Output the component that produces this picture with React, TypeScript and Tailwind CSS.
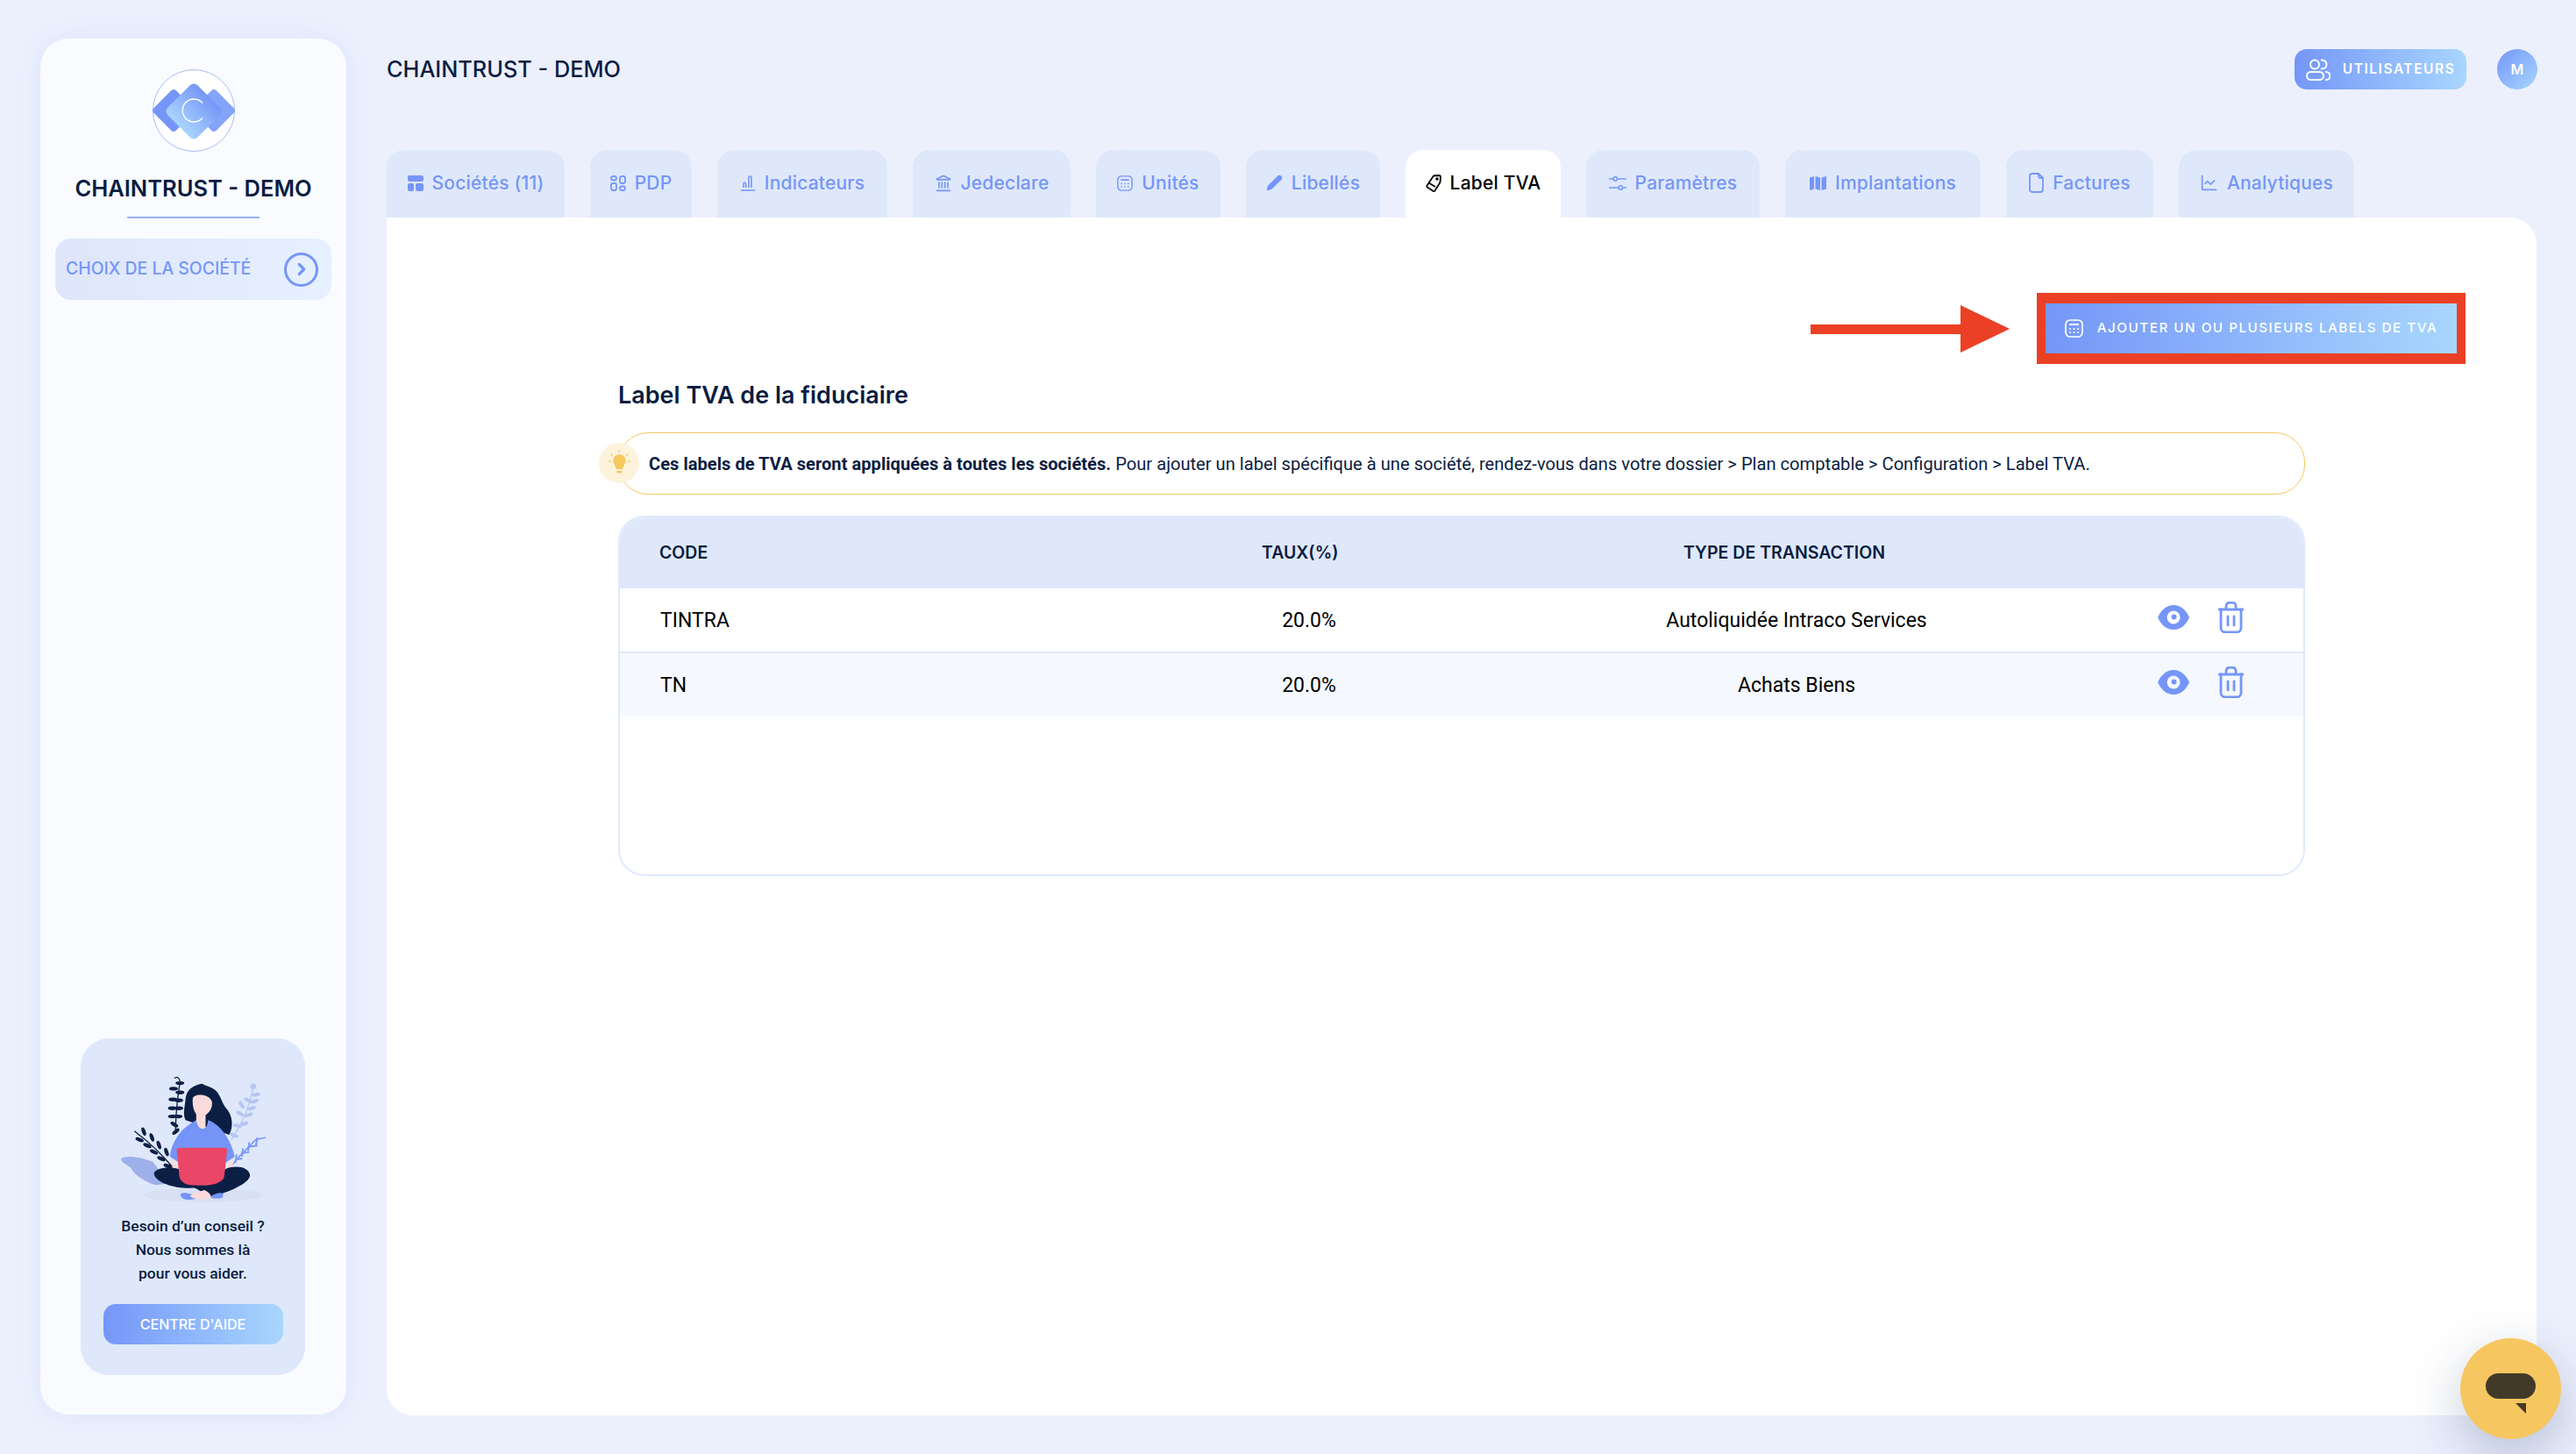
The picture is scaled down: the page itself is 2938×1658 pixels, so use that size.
import React from 'react';
import { Landmark, ChartLine, ChevronRight, Pen } from 'lucide-react';

const poppins = "font-['Inter','Open_Sans',sans-serif]";

const LayoutIcon = () => (
  <svg viewBox="0 0 18 18" className="h-[18px] w-[18px]" fill="currentColor">
    <rect x="0" y="0" width="18" height="7" rx="2" />
    <rect x="0" y="9" width="7" height="9" rx="2" />
    <rect x="9" y="9" width="9" height="9" rx="2" />
  </svg>
);

const PdpIcon = () => (
  <svg viewBox="0 0 18 18" className="h-[18px] w-[18px]" fill="none" stroke="currentColor" strokeWidth="1.800">
    <rect x="1" y="1" width="6" height="4.500" rx="2.200" />
    <rect x="11" y="1" width="6" height="8" rx="2.200" />
    <rect x="1" y="9" width="6" height="8" rx="2.200" />
    <rect x="11" y="12.500" width="6" height="4.500" rx="2.200" />
  </svg>
);

const BarsIcon = () => (
  <svg viewBox="0 0 18 18" className="h-[18px] w-[18px]" fill="none" stroke="currentColor" strokeWidth="1.600">
    <path d="M1 17h16" />
    <path d="M4 14V9.500a1.200 1.200 0 0 1 2.600 0V14" />
    <path d="M10 14V2.500a1.400 1.400 0 0 1 3 0V14" />
  </svg>
);

const MapIcon = () => (
  <svg viewBox="0 0 19 16" className="h-[16px] w-[19px]" fill="currentColor">
    <path d="M0 1.500 5 0v14.500L0 16z" />
    <path d="M6.500 0 12 1.500V16l-5.500-1.500z" />
    <path d="M13.500 1.500 19 0v14.500L13.500 16z" />
  </svg>
);

const SlidersIcon = () => (
  <svg viewBox="0 0 20 18" className="h-[18px] w-[20px]" fill="none" stroke="currentColor" strokeWidth="1.600">
    <path d="M0 4h5M9.500 4H20M0 14h11M15.500 14H20" />
    <circle cx="7.300" cy="4" r="2.200" />
    <circle cx="13.300" cy="14" r="2.200" />
  </svg>
);

const TagIcon = () => (
  <svg viewBox="0 0 18 20" className="h-[20px] w-[18px]" fill="none" stroke="currentColor" strokeWidth="1.800" strokeLinejoin="round">
    <path d="M9 1.500 15 1c1.200 0 2 .800 2 2l-.500 6-6 9.500c-.500.700-1.200.800-1.800.400L2 14.500c-.700-.500-.800-1.200-.400-1.900z" />
    <path d="M3.500 9.500l7.500 4.500" />
    <circle cx="13" cy="5" r="0.900" />
  </svg>
);

const FileIcon = () => (
  <svg viewBox="0 0 17 23" className="h-[23px] w-[17px]" fill="none" stroke="currentColor" strokeWidth="1.800" strokeLinejoin="round">
    <path d="M4 1h7l5 5v13a3 3 0 0 1-3 3H4a3 3 0 0 1-3-3V4a3 3 0 0 1 3-3z" />
    <path d="M11 1v3a2 2 0 0 0 2 2h3" />
  </svg>
);

const UsersIcon = () => (
  <svg viewBox="0 0 28 25" className="h-[25px] w-[28px]" fill="none" stroke="currentColor" strokeWidth="2">
    <circle cx="10" cy="6.500" r="5" />
    <path d="M17 1.500h1.500a5 5 0 0 1 0 10H17" />
    <rect x="1" y="15" width="19" height="9" rx="4.500" />
    <path d="M22 15h1a4.500 4.500 0 0 1 0 9h-1" />
  </svg>
);

const TrashIcon = () => (
  <svg viewBox="0 0 29 36" className="h-[36px] w-[29px]" fill="none" stroke="currentColor" strokeWidth="2.800" strokeLinecap="round">
    <path d="M1 9h27" />
    <path d="M3 9v21a5 5 0 0 0 5 5h13a5 5 0 0 0 5-5V9" />
    <path d="M9 8V5a4 4 0 0 1 4-4h3a4 4 0 0 1 4 4v3" />
    <path d="M11 17v10M18 17v10" />
  </svg>
);

// same glyph for the Unités tab and the add button
const CalcIcon = ({ s }: { s: string }) => (
  <svg viewBox="0 0 21 21" className={s} fill="none" stroke="currentColor" strokeWidth="1.700">
    <rect x="1" y="1" width="19" height="19" rx="5" />
    <path d="M5 6h11" strokeWidth="2" />
    <path d="M6 11h.01M10.500 11h.01M15 11h.01M6 15h.01M10.500 15h.01M15 15h.01" strokeWidth="2" strokeLinecap="round" />
  </svg>
);

const tabs = [
  { label: 'Sociétés (11)', icon: <LayoutIcon />, w: 'w-[203px]' },
  { label: 'PDP', icon: <PdpIcon />, w: 'w-[116px]' },
  { label: 'Indicateurs', icon: <BarsIcon />, w: 'w-[194px]' },
  { label: 'Jedeclare', icon: <Landmark size={20} />, w: 'w-[180px]' },
  { label: 'Unités', icon: <CalcIcon s="h-[18px] w-[18px]" />, w: 'w-[142px]' },
  { label: 'Libellés', icon: <Pen size={19} fill="currentColor" />, w: 'w-[153px]' },
  { label: 'Label TVA', icon: <TagIcon />, w: 'w-[177px]', active: true },
  { label: 'Paramètres', icon: <SlidersIcon />, w: 'w-[198px]' },
  { label: 'Implantations', icon: <MapIcon />, w: 'w-[223px]' },
  { label: 'Factures', icon: <FileIcon />, w: 'w-[168px]' },
  { label: 'Analytiques', icon: <ChartLine size={21} />, w: 'w-[200px]' },
];

const rows = [
  { code: 'TINTRA', rate: '20.0%', type: 'Autoliquidée Intraco Services', bg: 'bg-white' },
  { code: 'TN', rate: '20.0%', type: 'Achats Biens', bg: 'bg-[#f5f8fe]' },
];

const Logo = () => (
  <svg viewBox="0 0 94 94" className="h-[94px] w-[94px]">
    <defs>
      <linearGradient id="lg" x1="0" y1="0" x2="0" y2="1">
        <stop offset="0" stopColor="#7596f8" />
        <stop offset="1" stopColor="#a9d6fd" />
      </linearGradient>
    </defs>
    <circle cx="47" cy="47" r="46.500" fill="#fff" stroke="#93a9f1" strokeWidth="0.800" />
    <rect x="6" y="29" width="36" height="36" rx="4" transform="rotate(45 24 47)" fill="#7596f8" />
    <rect x="52" y="29" width="36" height="36" rx="4" transform="rotate(45 70 47)" fill="#84a4f9" />
    <rect x="23" y="24" width="48" height="48" rx="6" transform="rotate(45 47 48)" fill="url(#lg)" />
    <path d="M57 38.500A13 13 0 1 0 57 55.500" fill="none" stroke="#fff" strokeWidth="1.400" />
  </svg>
);

const Fern = ({ color, d, leaves }: { color: string; d: string; leaves: number[][] }) => (
  <g stroke={color} fill={color}>
    <path d={d} fill="none" strokeWidth="4" />
    {leaves.map(([x, y, r], i) => (
      <ellipse key={i} cx={x} cy={y} rx="15" ry="6.500" transform={`rotate(${r} ${x} ${y})`} stroke="none" />
    ))}
  </g>
);

const Illustration = () => (
  <svg viewBox="220 190 520 450" className="h-[150px] w-[173px]">
    <ellipse cx="513" cy="610" rx="205" ry="24" fill="#d8e1f3" />
    <path d="M232 485c18-14 68-6 108 10l60 75-50 5c-50-15-80-45-85-60-15-10-35-20-33-30z" fill="#9db0ea" />
    <Fern
      color="#0b1f44"
      d="M278 390c40 30 90 75 132 125"
      leaves={[
        [296, 420, 20], [310, 392, 70], [322, 440, 25], [338, 412, 70], [345, 462, 25],
        [362, 438, 70], [370, 485, 25], [388, 462, 70], [392, 510, 20],
      ]}
    />
    <Fern
      color="#0b1f44"
      d="M415 210c10-10 22 0 18 20-8 50-14 110-14 170"
      leaves={[
        [434, 226, 0], [412, 245, 0], [434, 258, 0], [410, 282, 0], [430, 285, 0],
        [408, 312, 0], [430, 312, 0], [408, 340, 0], [428, 340, 0], [415, 368, 30], [420, 392, -40],
      ]}
    />
    <Fern
      color="#b6c5f1"
      d="M685 240c-10 60-40 130-75 180"
      leaves={[
        [695, 265, -10], [668, 285, 30], [690, 288, -20], [645, 300, 60], [680, 312, -20],
        [640, 330, 30], [670, 335, -20], [632, 372, 10], [655, 365, -20], [620, 405, 20],
      ]}
    />
    <circle cx="685" cy="237" r="10" fill="#b6c5f1" />
    <path d="M728 412l-35 8-28 30-30 30-25 30" fill="none" stroke="#7b98f8" strokeWidth="5" />
    <path
      d="M700 412l-6 30M672 428l-4 30M650 450l-3 28M628 470l-3 28M700 440l-30 4M672 462l-28 4M648 484l-24 4"
      fill="none"
      stroke="#7b98f8"
      strokeWidth="6"
    />
    <path
      d="M510 228c-30 5-55 20-57 55-2 25-10 45 0 70l150 50c15-30 12-65-10-90-15-18-20-50-40-65-15-10-30-12-43-20z"
      fill="#0b1f44"
    />
    <path d="M478 280c0-20 58-20 66 10 2 18-6 35-22 45v40c-5 12-28 12-32-2v-40c-10-15-14-35-12-53z" fill="#fadada" />
    <path d="M400 478c5-40 25-90 90-125 5 40 40 40 40 0 45 15 80 70 92 125l-30 20H430z" fill="#7495f7" />
    <path d="M400 478l28 35v40l-15-20z M622 478l-28 35v40l15-20z" fill="#fadada" />
    <path
      d="M345 535c5-15 40-25 85-15l60 55 40 0 60-55c40-15 80-5 84 20 3 25-60 55-130 75-25-5-50-30-65-30-50 5-130-15-134-50z"
      fill="#0b1f44"
    />
    <path d="M436 605c20-10 60 10 64 15-20 5-50 8-55 2-6-4-10-12-9-17zM582 605c-10-8-40 5-44 12 10 6 40 8 44-2z" fill="#7495f7" />
    <path d="M468 612c15-10 35-15 50-20 20 10 26 20 20 28-20 6-60 6-70-8z" fill="#fadada" />
    <path d="M432 447h155c6 0 9 4 9 9l-10 90c-1 15-30 30-60 30h-50c-25 0-42-15-44-30l-9-90c0-5 3-9 9-9z" fill="#ea4668" />
  </svg>
);

const Sidebar = () => (
  <aside className="flex h-[1569px] w-[349px] shrink-0 flex-col rounded-[32px] bg-[#f9fbff] shadow-[0_0_30px_rgba(117,150,248,0.12)]">
    <div className="mt-[35px] flex justify-center">
      <Logo />
    </div>
    <h1 className={`mt-[24px] text-center text-[25.500px] leading-[36px] font-semibold whitespace-nowrap text-[#0a1d42] ${poppins}`}>
      CHAINTRUST - DEMO
    </h1>
    <div className="mx-auto mt-[14px] h-[2px] w-[151px] bg-[#9bb0ee]" />
    <button className="mx-[17px] mt-[23px] flex h-[70px] items-center justify-between rounded-[18px] bg-linear-to-r from-[#dfe6fb] to-[#e6f0ff] pr-[15px] pl-[12px]">
      <span className={`text-[19.400px] font-medium whitespace-nowrap text-[#7596f8] ${poppins}`}>CHOIX DE LA SOCIÉTÉ</span>
      <span className="flex h-[39px] w-[39px] items-center justify-center rounded-full border-[3.500px] border-[#7596f8] text-[#7596f8]">
        <ChevronRight size={22} strokeWidth={3.500} />
      </span>
    </button>

    <div className="mt-auto mb-[45px] ml-[46px] flex h-[384px] w-[256px] flex-col items-center rounded-[32px] bg-[#dfe8fb]">
      <div className="mt-[39px]">
        <Illustration />
      </div>
      <p className="mt-[12px] text-center font-['Roboto',sans-serif] text-[17.400px] leading-[27px] font-medium whitespace-nowrap text-[#0a1d42]">
        Besoin d’un conseil ?
        <br />
        Nous sommes là
        <br />
        pour vous aider.
      </p>
      <button className={`mt-[21px] h-[46px] w-[205px] rounded-[14px] bg-linear-to-r from-[#7596f8] to-[#a9d6fd] text-[16px] font-medium text-white ${poppins}`}>
        CENTRE D'AIDE
      </button>
    </div>
  </aside>
);

const Tabs = () => (
  <div className="flex gap-[29px]">
    {tabs.map((t) => (
      <div
        key={t.label}
        className={`flex h-[77px] ${t.w} items-center justify-center gap-[10px] rounded-t-[20px] pb-[2px] text-[21px] font-medium tracking-[0.2px] whitespace-nowrap ${poppins} ${
          t.active ? 'bg-white text-black' : 'bg-[#dfe8fb] text-[#7596f8]'
        }`}
      >
        {t.icon}
        <span>{t.label}</span>
      </div>
    ))}
  </div>
);

const LabelTable = () => (
  <div className="mt-[24px] h-[411px] overflow-hidden rounded-[30px] border-2 border-[#e0e9fc]">
    <div className={`grid h-[81px] grid-cols-[687px_481px_1fr] items-center bg-[#dfe8fb] pl-[45px] text-[19.500px] font-semibold text-[#0a1d42] ${poppins}`}>
      <span>CODE</span>
      <span>TAUX(%)</span>
      <span>TYPE DE TRANSACTION</span>
    </div>
    {rows.map((r, i) => (
      <div
        key={r.code}
        className={`grid grid-cols-[620px_240px_848px_1fr] items-center pl-[46px] font-['Roboto',sans-serif] text-[23px] text-black ${r.bg} ${
          i === 0 ? 'h-[74px] border-b-2 border-[#e0e9fc]' : 'h-[72px]'
        }`}
      >
        <span className="pt-[2px]">{r.code}</span>
        <span className="pt-[2px] text-center">{r.rate}</span>
        <span className="pt-[2px] pl-[24px] text-center">{r.type}</span>
        <span className="-mt-[6px] flex items-center gap-[33px] text-[#7596f8]">
          <svg viewBox="0 0 36 28" className="h-[28px] w-[36px]" fill="currentColor">
            <path
              fillRule="evenodd"
              d="M18 0c9 0 15 7 18 14-3 7-9 14-18 14S3 21 0 14C3 7 9 0 18 0zm0 6.500a7.500 7.500 0 1 0 0 15 7.500 7.500 0 0 0 0-15z"
            />
            <circle cx="18.500" cy="13.500" r="3" />
          </svg>
          <TrashIcon />
        </span>
      </div>
    ))}
  </div>
);

export default function App() {
  return (
    <div className="relative flex h-[1658px] w-[2938px] overflow-hidden bg-[#ecf0fd] pt-[44px] pl-[46px]">
      <Sidebar />
      <main className="ml-[46px] flex w-[2452px] flex-col">
        <header className="-mr-[1px] flex h-[70px] items-center justify-between">
          <h2 className={`text-[25.300px] font-medium whitespace-nowrap text-[#0a1d42] ${poppins}`}>CHAINTRUST - DEMO</h2>
          <div className="flex items-center gap-[35px]">
            <button className={`flex h-[46px] w-[196px] items-center justify-center gap-[14px] rounded-[14px] bg-linear-to-r from-[#7596f8] to-[#a9d6fd] text-[15.500px] font-semibold tracking-[0.1em] text-white ${poppins}`}>
              <UsersIcon />
              UTILISATEURS
            </button>
            <div className={`flex h-[46px] w-[46px] items-center justify-center rounded-full bg-linear-to-br from-[#7596f8] to-[#a9d6fd] text-[16px] font-semibold text-white ${poppins}`}>
              M
            </div>
          </div>
        </header>
        <div className="mt-[57px]">
          <Tabs />
        </div>
        <section className="h-[1366px] rounded-tr-[30px] rounded-b-[30px] bg-white px-[264px] pt-[86px]">
          <div className="-mr-[183px] flex items-center justify-end">
            <svg viewBox="0 0 227 54" className="mr-[31px] h-[54px] w-[227px]" fill="#eb4025">
              <path d="M0 22h171V0l56 27-56 27V33H0z" />
            </svg>
            <div className="border-[10px] border-y-[12px] border-[#eb4025]">
              <button className={`flex h-[57px] w-[469px] items-center justify-center gap-[16px] bg-linear-to-r from-[#7596f8] to-[#a9d6fd] text-[15.200px] font-medium tracking-[0.1em] whitespace-nowrap text-white ${poppins}`}>
                <CalcIcon s="h-[21px] w-[21px]" />
                AJOUTER UN OU PLUSIEURS LABELS DE TVA
              </button>
            </div>
          </div>
          <h3 className={`mt-[18px] text-[27px] leading-[36px] font-semibold text-[#0a1d42] ${poppins}`}>Label TVA de la fiduciaire</h3>
          <div className="relative mt-[24px] flex h-[71px] items-center rounded-[34px] border-[1.500px] border-[#f6c860] pt-[1px] pl-[34px] font-['Roboto',sans-serif] text-[20.150px] whitespace-nowrap text-[#0a1d42]">
            <span className="absolute top-[11px] -left-[23px] flex h-[46px] w-[46px] items-center justify-center rounded-full bg-[#fdf3dd]">
              <svg viewBox="0 0 28 34" className="h-[30px] w-[25px]" fill="#f6c860">
                <path d="M14 6c5 0 8 3.500 8 8 0 4-3 6-3.500 11h-9C9 20 6 18 6 14c0-4.500 3-8 8-8z" />
                <rect x="10.500" y="27" width="7" height="3" rx="1" />
                <path d="M14 0v3M3 5l2 3M25 5l-2 3M0 15h3M25 15h3" stroke="#f6c860" strokeWidth="1.500" />
              </svg>
            </span>
            <p>
              <strong className="font-bold">Ces labels de TVA seront appliquées à toutes les sociétés.</strong> Pour ajouter un label spécifique à une société, rendez-vous dans votre dossier &gt; Plan comptable &gt; Configuration &gt; Label TVA.
            </p>
          </div>
          <LabelTable />
        </section>
      </main>

      {/* Chat launcher */}
      <div className="absolute top-[1526px] left-[2806px] flex h-[115px] w-[115px] items-center justify-center rounded-full bg-[#f6c660] shadow-[0_20px_60px_rgba(20,40,90,0.25)]">
        <div className="relative -mt-[6px] h-[29px] w-[57px] rounded-full bg-[#423a28]">
          <svg viewBox="0 0 12 12" className="absolute top-[34px] left-[34px] h-[12px] w-[12px]" fill="#423a28">
            <path d="M0 0h12v12z" />
          </svg>
        </div>
      </div>
    </div>
  );
}
